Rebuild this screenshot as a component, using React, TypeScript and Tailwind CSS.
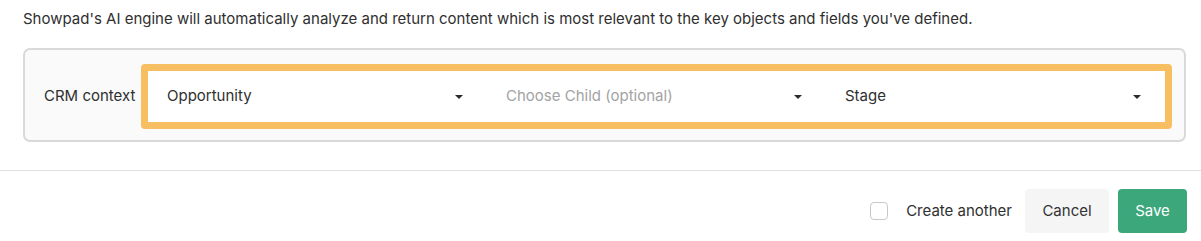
import React from 'react'

const Caret = () => (
  <svg width="8" height="4" viewBox="0 0 8 4" className="shrink-0">
    <path d="M0 0 H8 L4 4 Z" fill="#2b2b2b" />
  </svg>
)

const SelectField = ({ value, placeholder }: { value?: string; placeholder?: string }) => (
  <div className="flex-1 flex items-center justify-between pl-[19px] pr-[24px] h-full bg-white">
    {value ? (
      <span className="text-[#2f2f2f]">{value}</span>
    ) : (
      <span className="text-[#a3a3a3]">{placeholder}</span>
    )}
    <Caret />
  </div>
)

export default function App() {
  return (
    <div
      className="w-[1201px] h-[241px] bg-white text-[15px] text-[#2f2f2f]"
      style={{ fontFamily: 'Inter, "Noto Sans", sans-serif' }}
    >
      <div className="pl-[23px] pr-[15px] pt-[9px]">
        <p className="leading-[20px]">
          Showpad's AI engine will automatically analyze and return content which is most relevant to the key objects and fields you've defined.
        </p>
        <div className="mt-[19px] h-[94px] border-2 border-[#d9d9d9] rounded-[7px] bg-[#fafafa] flex pt-[14px] pb-[11px] pr-[12px]">
          <div className="w-[116px] pl-[19px] flex items-center">CRM context</div>
          <div className="flex-1 flex border-[7px] border-[#f8bf62] rounded-[4px]">
            <SelectField value="Opportunity" />
            <SelectField placeholder="Choose Child (optional)" />
            <SelectField value="Stage" />
          </div>
        </div>
      </div>
      <div className="mt-[28px] border-t border-[#e0e0e0]" />
      <div className="flex items-center justify-end pt-[18px] pr-[14px]">
        <label className="flex items-center gap-[18px] mr-[13px]">
          <span className="w-[18px] h-[18px] rounded-[4px] border border-[#c8c8c8] bg-white" />
          <span>Create another</span>
        </label>
        <button className="w-[84px] h-[44px] rounded-[4px] bg-[#f5f5f5] text-[#333]">
          Cancel
        </button>
        <button className="ml-[9px] w-[69px] h-[44px] rounded-[4px] bg-[#3ba77b] text-white">
          Save
        </button>
      </div>
    </div>
  )
}
